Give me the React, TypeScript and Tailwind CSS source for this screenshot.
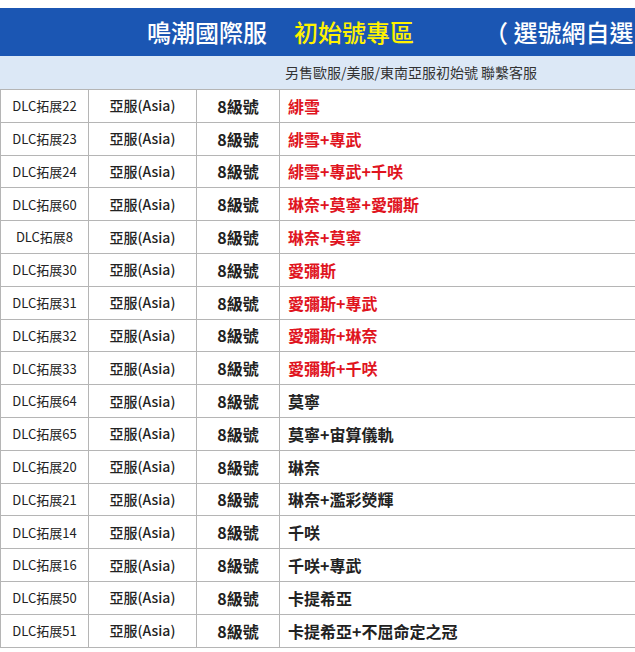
const rows: [string, string, boolean][] = [
  ["DLC拓展22", "緋雪", true],
  ["DLC拓展23", "緋雪+專武", true],
  ["DLC拓展24", "緋雪+專武+千咲", true],
  ["DLC拓展60", "琳奈+莫寧+愛彌斯", true],
  ["DLC拓展8", "琳奈+莫寧", true],
  ["DLC拓展30", "愛彌斯", true],
  ["DLC拓展31", "愛彌斯+專武", true],
  ["DLC拓展32", "愛彌斯+琳奈", true],
  ["DLC拓展33", "愛彌斯+千咲", true],
  ["DLC拓展64", "莫寧", false],
  ["DLC拓展65", "莫寧+宙算儀軌", false],
  ["DLC拓展20", "琳奈", false],
  ["DLC拓展21", "琳奈+濫彩熒輝", false],
  ["DLC拓展14", "千咲", false],
  ["DLC拓展16", "千咲+專武", false],
  ["DLC拓展50", "卡提希亞", false],
  ["DLC拓展51", "卡提希亞+不屈命定之冠", false],
];

export default function App() {
  return (
    <div
      className="w-[635px] h-[652px] overflow-hidden bg-white"
      style={{ fontFamily: '"Noto Sans CJK TC", "Noto Sans", sans-serif' }}
    >
      <div className="h-2" />
      <div className="h-12 bg-[#1b56b3] flex items-center pl-[147px] whitespace-nowrap text-[24px] leading-none font-medium">
        <span className="text-white">鳴潮國際服</span>
        <span className="text-[#fff200] ml-[27px]">初始號專區</span>
        <span className="text-white ml-[70px]">（ 選號網自選</span>
      </div>
      <div className="h-[33px] bg-[#dce8f6] flex items-center pl-[285px] text-[14px] text-[#333]">
        另售歐服/美服/東南亞服初始號 聯繫客服
      </div>
      <div className="border-t border-[#b5b5b5]">
        {rows.map(([dlc, name, red]) => (
          <div key={dlc} className="h-[32.8px] flex border-b border-[#b5b5b5] text-[#222]">
            <div className="w-[89px] border-l border-r border-[#b5b5b5] flex items-center justify-center text-[13px]">
              {dlc}
            </div>
            <div className="w-[108px] border-r border-[#b5b5b5] flex items-center justify-center text-[14px] font-medium">
              亞服(Asia)
            </div>
            <div className="w-[83px] border-r border-[#b5b5b5] flex items-center justify-center text-[16px] font-bold">
              8級號
            </div>
            <div className={`flex-1 flex items-center pl-[8px] text-[16px] font-bold ${red ? "text-[#e0141e]" : "text-[#222]"}`}>
              {name}
            </div>
          </div>
        ))}
      </div>
    </div>
  );
}
